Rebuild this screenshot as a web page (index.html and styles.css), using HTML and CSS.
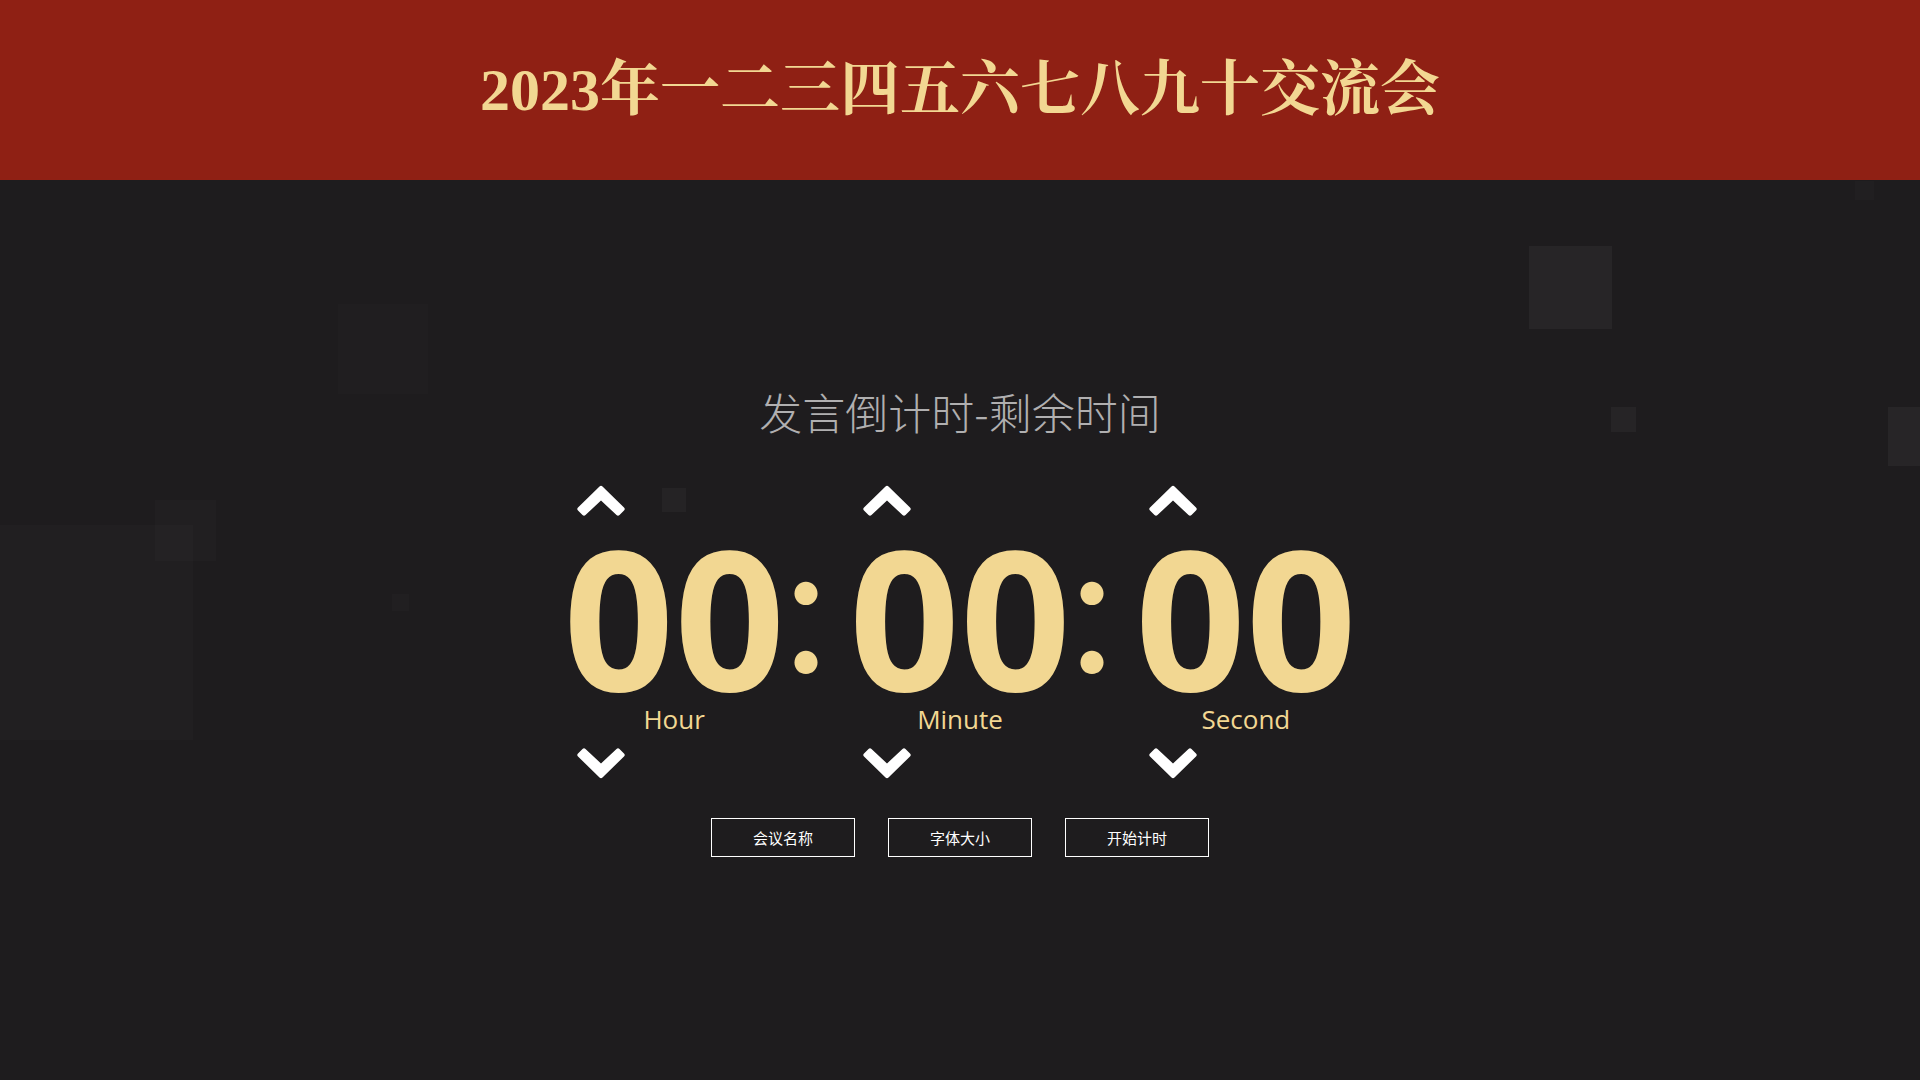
FILE: index.html
```html
<!DOCTYPE html>
<html lang="zh-CN">
<head>
    <meta charset="UTF-8">
    <meta name="viewport" content="width=device-width, initial-scale=1.0">
    <title>发言倒计时</title>
    <link rel="stylesheet" href="styles.css">
</head>
<body>
    <header class="header">
        <h1 class="title" id="title">2023年一二三四五六七八九十交流会</h1>
    </header>
    <div class="squares">
        <span class="square square-1"></span>
        <span class="square square-2"></span>
        <span class="square square-3"></span>
        <span class="square square-4"></span>
        <span class="square square-5"></span>
        <span class="square square-6"></span>
        <span class="square square-7"></span>
        <span class="square square-8"></span>
        <span class="square square-9"></span>
    </div>
    <main class="main">
        <h2 class="subtitle">发言倒计时-剩余时间</h2>
        <div class="clock">
            <div class="unit">
                <button class="arrow" aria-label="Hour up" onclick="change('hour', 1)">
                    <svg viewBox="0 0 48 32"><path d="M22.500 1.500Q24 0 25.500 1.500L47 22.500Q48.500 24 47 25.500L42.500 30Q41 31.500 39.500 30L24 15.500L8.500 30Q7 31.500 5.500 30L1 25.500Q-.5 24 1 22.500Z"/></svg>
                </button>
                <div class="digits" id="hour">00</div>
                <div class="label">Hour</div>
                <button class="arrow arrow-down" aria-label="Hour down" onclick="change('hour', -1)">
                    <svg viewBox="0 0 48 32"><path d="M22.500 30.500Q24 32 25.500 30.500L47 9.500Q48.500 8 47 6.500L42.500 2Q41 .5 39.500 2L24 16.500L8.500 2Q7 .5 5.500 2L1 6.500Q-.5 8 1 9.500Z"/></svg>
                </button>
            </div>
            <div class="colon">:</div>
            <div class="unit">
                <button class="arrow" aria-label="Minute up" onclick="change('minute', 1)">
                    <svg viewBox="0 0 48 32"><path d="M22.500 1.500Q24 0 25.500 1.500L47 22.500Q48.500 24 47 25.500L42.500 30Q41 31.500 39.500 30L24 15.500L8.500 30Q7 31.500 5.500 30L1 25.500Q-.5 24 1 22.500Z"/></svg>
                </button>
                <div class="digits" id="minute">00</div>
                <div class="label">Minute</div>
                <button class="arrow arrow-down" aria-label="Minute down" onclick="change('minute', -1)">
                    <svg viewBox="0 0 48 32"><path d="M22.500 30.500Q24 32 25.500 30.500L47 9.500Q48.500 8 47 6.500L42.500 2Q41 .5 39.500 2L24 16.500L8.500 2Q7 .5 5.500 2L1 6.500Q-.5 8 1 9.500Z"/></svg>
                </button>
            </div>
            <div class="colon">:</div>
            <div class="unit">
                <button class="arrow" aria-label="Second up" onclick="change('second', 1)">
                    <svg viewBox="0 0 48 32"><path d="M22.500 1.500Q24 0 25.500 1.500L47 22.500Q48.500 24 47 25.500L42.500 30Q41 31.500 39.500 30L24 15.500L8.500 30Q7 31.500 5.500 30L1 25.500Q-.5 24 1 22.500Z"/></svg>
                </button>
                <div class="digits" id="second">00</div>
                <div class="label">Second</div>
                <button class="arrow arrow-down" aria-label="Second down" onclick="change('second', -1)">
                    <svg viewBox="0 0 48 32"><path d="M22.500 30.500Q24 32 25.500 30.500L47 9.500Q48.500 8 47 6.500L42.500 2Q41 .5 39.500 2L24 16.500L8.500 2Q7 .5 5.500 2L1 6.500Q-.5 8 1 9.500Z"/></svg>
                </button>
            </div>
        </div>
        <div class="actions">
            <button class="btn" onclick="setTitle()">会议名称</button>
            <button class="btn" onclick="setTitleSize()">字体大小</button>
            <button class="btn" onclick="start()">开始计时</button>
        </div>
    </main>
    <script>
        let time = { hour: 0, minute: 0, second: 0 };
        let timer = null;

        function render() {
            for (let key in time) {
                document.getElementById(key).textContent = String(time[key]).padStart(2, '0');
            }
        }

        function change(key, step) {
            let max = key === 'hour' ? 24 : 60;
            time[key] = (time[key] + step + max) % max;
            render();
        }

        function setTitle() {
            let name = prompt('会议名称');
            if (name) document.getElementById('title').textContent = name;
        }

        function setTitleSize() {
            let size = parseInt(prompt('字体大小'));
            if (size) document.getElementById('title').style.fontSize = size + 'px';
        }

        function start() {
            clearInterval(timer);
            timer = setInterval(() => {
                let left = time.hour * 3600 + time.minute * 60 + time.second - 1;
                if (left < 0) {
                    clearInterval(timer);
                    return;
                }
                time.hour = Math.floor(left / 3600);
                time.minute = Math.floor(left % 3600 / 60);
                time.second = left % 60;
                render();
            }, 1000);
        }
    </script>
</body>
</html>
```
FILE: styles.css
```css
* {
    box-sizing: border-box;
}
body {
    position: relative;
    display: flex;
    flex-direction: column;
    min-height: 100vh;
    margin: 0;
    overflow: hidden;
    background-color: #1e1c1e;
    color: #f2d792;
    font-family: "Open Sans", "Noto Sans CJK SC", sans-serif;
}
.header {
    padding: 45px 20px;
    background-color: #8f2014;
    text-align: center;
}
.title {
    margin: 0;
    font-family: "Liberation Serif", "Noto Serif CJK SC", "Noto Sans CJK SC", serif;
    font-size: 60px;
    font-weight: bold;
    line-height: 90px;
}
.main {
    position: relative;
    flex: 1;
    display: flex;
    flex-direction: column;
    align-items: center;
    justify-content: center;
    padding-bottom: 22px;
}
.subtitle {
    margin: 0 0 44px;
    color: #b0afb0;
    font-family: "Noto Sans CJK SC", sans-serif;
    font-size: 43px;
    font-weight: 300;
    line-height: 60px;
}
.clock {
    display: flex;
    align-items: center;
}
.unit {
    display: flex;
    flex-direction: column;
}
.arrow {
    align-self: flex-start;
    width: 48px;
    height: 32px;
    margin-left: 14px;
    padding: 0;
    border: none;
    background: none;
    cursor: pointer;
}
.arrow svg {
    display: block;
    fill: #fff;
}
.arrow-down {
    margin-top: 10px;
}
.digits {
    margin: 19px 0 5px;
    font-size: 194px;
    font-weight: bold;
    line-height: 160px;
}
.label {
    font-size: 26px;
    line-height: 36px;
    text-align: center;
}
.colon {
    display: flex;
    justify-content: center;
    width: 42px;
    margin-right: 22px;
    padding-bottom: 60px;
    font-family: Lato, sans-serif;
    font-size: 184px;
    line-height: 160px;
}
.actions {
    display: flex;
    gap: 33px;
    margin-top: 39px;
}
.btn {
    width: 144px;
    height: 39px;
    padding: 0;
    border: 1px solid #fff;
    background: transparent;
    color: #fff;
    font-family: "Noto Sans CJK SC", sans-serif;
    font-size: 15px;
    cursor: pointer;
}
.btn:hover {
    background-color: rgba(255, 255, 255, 0.1);
}

/* floating background squares */
.squares {
    position: absolute;
    top: 0;
    right: 0;
    bottom: 0;
    left: 0;
    overflow: hidden;
    pointer-events: none;
}
.square {
    position: absolute;
    aspect-ratio: 1;
    background-color: rgba(255, 255, 255, 0.015);
}
.square-1 {
    left: -22px;
    top: 525px;
    width: 215px;
}
.square-2 {
    left: 155px;
    top: 500px;
    width: 61px;
}
.square-3 {
    left: 338px;
    top: 304px;
    width: 90px;
    background-color: rgba(255, 255, 255, 0.01);
}
.square-4 {
    left: 392px;
    top: 594px;
    width: 17px;
}
.square-5 {
    left: 662px;
    top: 488px;
    width: 24px;
    background-color: rgba(255, 255, 255, 0.03);
}
.square-6 {
    right: 308px;
    top: 246px;
    width: 83px;
    background-color: rgba(255, 255, 255, 0.045);
}
.square-7 {
    right: 284px;
    top: 407px;
    width: 25px;
    background-color: rgba(255, 255, 255, 0.04);
}
.square-8 {
    right: -27px;
    top: 407px;
    width: 59px;
    background-color: rgba(255, 255, 255, 0.045);
}
.square-9 {
    right: 46px;
    top: 181px;
    width: 19px;
}
```
